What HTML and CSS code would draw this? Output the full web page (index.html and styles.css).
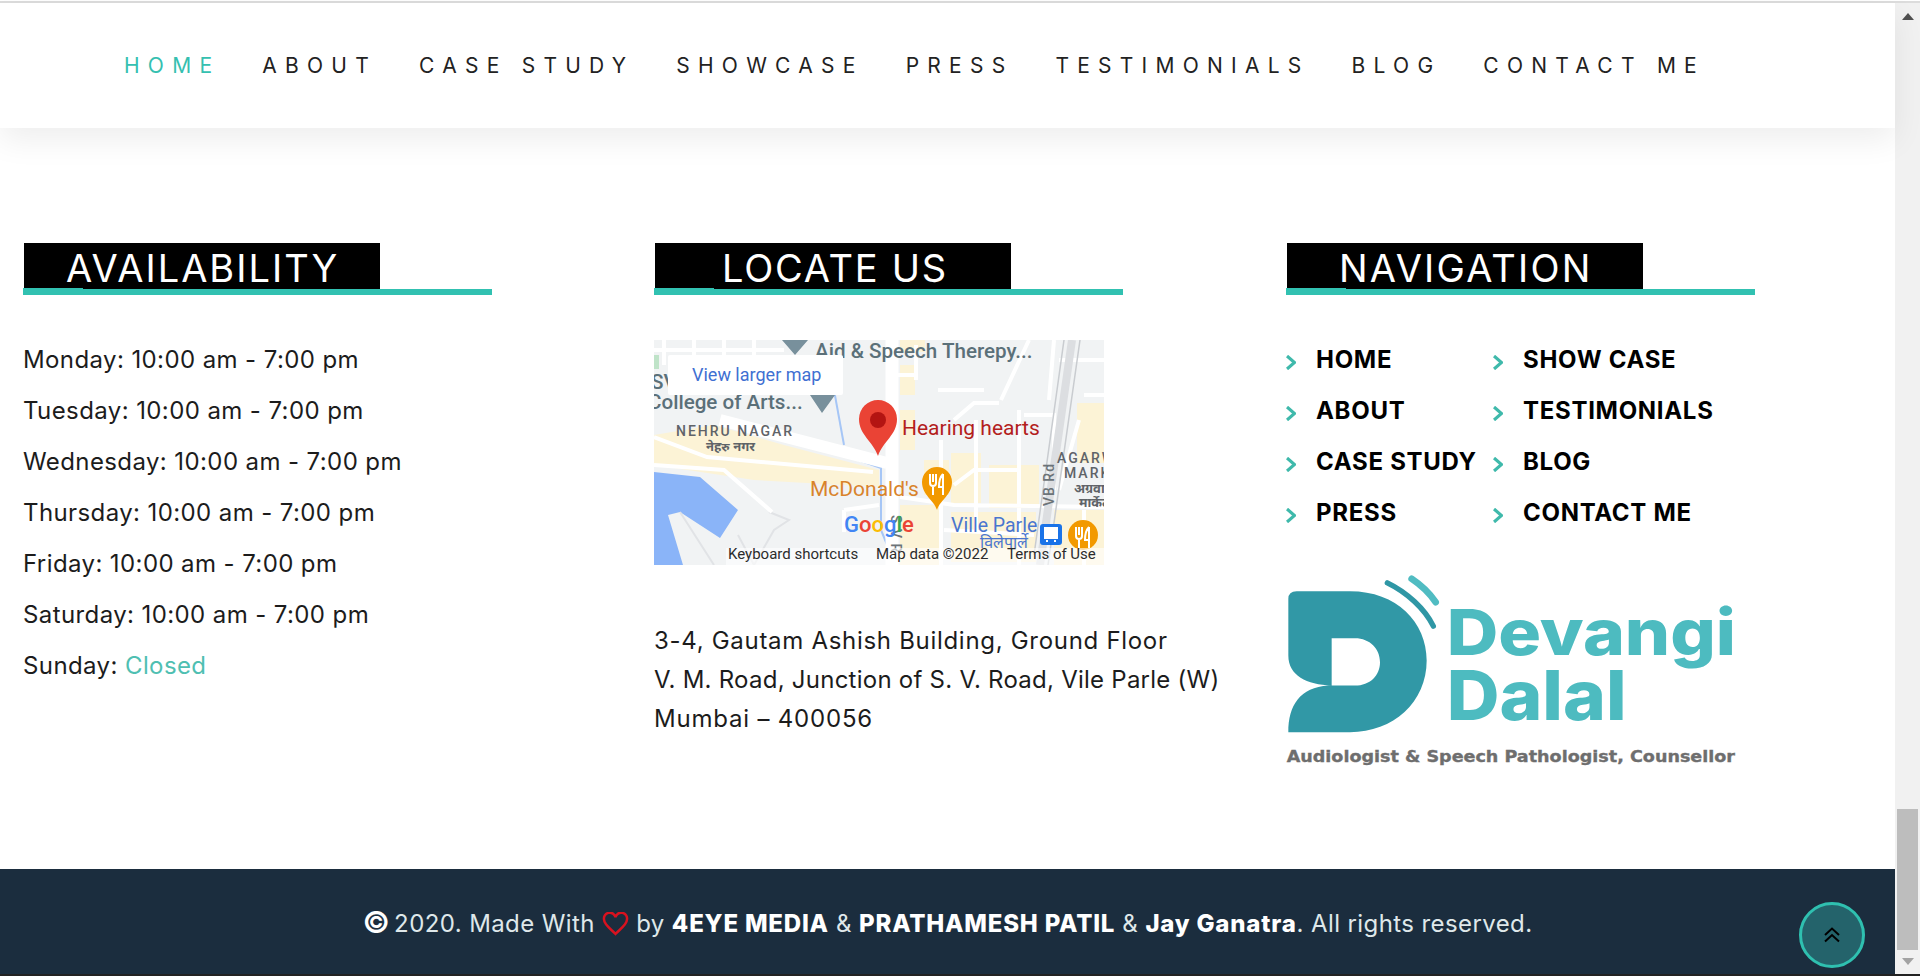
FILE: index.html
```html
<!DOCTYPE html>
<html lang="en">
<head>
<meta charset="utf-8">
<title>Devangi Dalal</title>
<link rel="stylesheet" href="styles.css">
</head>
<body>
<div class="topline"></div>
<div class="viewport">
  <div class="page">
    <nav class="nav">
      <a class="nav-link nav-active">HOME</a>
      <a class="nav-link">ABOUT</a>
      <a class="nav-link">CASE STUDY</a>
      <a class="nav-link">SHOWCASE</a>
      <a class="nav-link">PRESS</a>
      <a class="nav-link">TESTIMONIALS</a>
      <a class="nav-link">BLOG</a>
      <a class="nav-link">CONTACT ME</a>
    </nav>
    <main class="columns">
      <section class="col">
        <div class="heading"><h2 class="heading-box heading-a">AVAILABILITY</h2></div>
        <ul class="hours">
          <li>Monday: 10:00 am - 7:00 pm</li>
          <li>Tuesday: 10:00 am - 7:00 pm</li>
          <li>Wednesday: 10:00 am - 7:00 pm</li>
          <li>Thursday: 10:00 am - 7:00 pm</li>
          <li>Friday: 10:00 am - 7:00 pm</li>
          <li>Saturday: 10:00 am - 7:00 pm</li>
          <li>Sunday: <span class="closed">Closed</span></li>
        </ul>
      </section>
      <section class="col">
        <div class="heading"><h2 class="heading-box heading-b">LOCATE US</h2></div>
        <svg class="map" viewBox="0 0 450 225" width="450" height="225">
          <rect class="m-bg" width="450" height="225"/>
          <path class="m-yellow" d="M0 95 60 85 130 105 225 130 225 147 100 140 0 125Z"/>
          <path class="m-yellow" d="M246 165h39v60h-39zM297 113h30v50h-30zM335 125h50v43h-50zM423 63h27v60h-27zM297 172h85v50h-85zM246 0h25v12h-25zM246 25h15v30h-15zM246 70h15v40h-15zM270 120h25v35h-25zM400 170h50v55h-50z"/>
          <rect class="m-green" x="0" y="15" width="5" height="14"/>
          <path class="m-water" d="M0 132 46 137 84 170 66 198 26 172 14 175 29 225H0Z"/>
          <path class="m-canal" d="M190 115 227 128 227 190 236 212"/>
          <path class="m-canal" d="M180 50 190 105"/>
          <path class="m-pier" d="M26 172 60 225M84 195 100 225 120 190 135 180 115 172M190 170 225 165"/>
          <path class="m-road-s" d="M0 10H130M10 0V25M40 0V15M70 0V15M100 0V15"/>
          <path class="m-road-s" d="M0 97 53 117 219 132M0 125 70 130 118 172M190 170 225 165M190 170V192"/>
          <path class="m-road-s" d="M238 35H262M262 40V5M284 50H330M300 80 320 63 345 63M287 100V225M322 80V190M347 60 375 0M370 75H400V150M365 70V225M300 145 320 130H365M246 157 300 165 450 167M290 190 380 195M400 0 395 60M425 80 405 150M430 170V225M405 20H450M430 55H450"/>
          <path class="m-road-m" d="M66 80 233 123"/>
          <path class="m-road-l" d="M238 0V225"/>
          <path class="m-rail" d="M418 0 386 225"/>
          <path class="m-rail-line" d="M410 0 380 215M426 0 394 225"/>
          <path class="m-marker" d="M128 0H154L141 15ZM156 55H181L168 73Z"/>
          <text class="m-label m-label-big" x="161" y="18">Aid &amp; Speech Therepy...</text>
          <text class="m-label m-label-big" x="-3" y="49">SV</text>
          <text class="m-label m-label-big" x="-6" y="69">College of Arts...</text>
          <rect class="m-card" x="14" y="15" width="175" height="40" rx="2"/>
          <text class="m-link" x="38" y="41">View larger map</text>
          <text class="m-area" x="22" y="96">NEHRU NAGAR</text>
          <text class="m-area-hi" x="52" y="111">नेहरु नगर</text>
          <path class="m-pin" d="M224 116C219 101 205 95 205 79A19 19 0 0 1 243 79C243 95 229 101 224 116Z"/>
          <circle class="m-pin-dot" cx="224" cy="80" r="8"/>
          <text class="m-red" x="248" y="95">Hearing hearts</text>
          <text class="m-orange" x="156" y="156">McDonald's</text>
          <path class="m-opin" d="M283 170C280 160 268 155 268 142A15 15 0 0 1 298 142C298 155 286 160 283 170Z"/>
          <path class="m-fork" d="M276 134V143Q276 146 279 146V155M279 134V142M282 134V143Q282 146 279 146M289 134V155M289 134Q285 138 285 147H289"/>
          <text class="m-area" x="403" y="123">AGARW</text>
          <text class="m-area" x="410" y="138">MARK</text>
          <text class="m-area-hi" x="420" y="153">अग्रवाल</text>
          <text class="m-area-hi" x="425" y="167">मार्केट</text>
          <text class="m-road-name" transform="translate(400 166) rotate(-90)">VB Rd</text>
          <text class="m-road-name" transform="translate(237 175) rotate(90)">S V R</text>
          <text class="m-google" x="190" y="192"><tspan class="g-b">G</tspan><tspan class="g-r">o</tspan><tspan class="g-y">o</tspan><tspan class="g-b">g</tspan><tspan class="g-g">l</tspan><tspan class="g-r">e</tspan></text>
          <text class="m-transit" x="297" y="192">Ville Parle</text>
          <text class="m-transit-hi" x="326" y="208">विलेपार्ले</text>
          <rect class="m-bus" x="386" y="184" width="22" height="21" rx="3"/>
          <path class="m-bus-in" d="M391 188h12v10h-12zM393 200v2M401 200v2"/>
          <circle class="m-opin" cx="429" cy="195" r="15"/>
          <path class="m-fork" d="M422 187V196Q422 199 425 199V208M425 187V195M428 187V196Q428 199 425 199M435 187V208M435 187Q431 191 431 200H435"/>
          <rect class="m-attr" x="72" y="208" width="378" height="17"/>
          <text class="m-attr-t" x="74" y="219">Keyboard shortcuts</text>
          <text class="m-attr-t" x="222" y="219">Map data ©2022</text>
          <text class="m-attr-t" x="353" y="219">Terms of Use</text>
        </svg>
        <address class="addr">
          <span class="addr-line addr-a">3-4, Gautam Ashish Building, Ground Floor</span>
          <span class="addr-line addr-b">V. M. Road, Junction of S. V. Road, Vile Parle (W)</span>
          <span class="addr-line addr-c">Mumbai – 400056</span>
        </address>
      </section>
      <section class="col">
        <div class="heading"><h2 class="heading-box heading-c">NAVIGATION</h2></div>
        <ul class="links">
          <li class="link"><svg class="chev" viewBox="0 0 10 15"><path d="M1 1 8.500 7.500 1 14"/></svg>HOME</li>
          <li class="link"><svg class="chev" viewBox="0 0 10 15"><path d="M1 1 8.500 7.500 1 14"/></svg>SHOW CASE</li>
          <li class="link"><svg class="chev" viewBox="0 0 10 15"><path d="M1 1 8.500 7.500 1 14"/></svg>ABOUT</li>
          <li class="link"><svg class="chev" viewBox="0 0 10 15"><path d="M1 1 8.500 7.500 1 14"/></svg>TESTIMONIALS</li>
          <li class="link"><svg class="chev" viewBox="0 0 10 15"><path d="M1 1 8.500 7.500 1 14"/></svg>CASE STUDY</li>
          <li class="link"><svg class="chev" viewBox="0 0 10 15"><path d="M1 1 8.500 7.500 1 14"/></svg>BLOG</li>
          <li class="link"><svg class="chev" viewBox="0 0 10 15"><path d="M1 1 8.500 7.500 1 14"/></svg>PRESS</li>
          <li class="link"><svg class="chev" viewBox="0 0 10 15"><path d="M1 1 8.500 7.500 1 14"/></svg>CONTACT ME</li>
        </ul>
        <svg class="logo" viewBox="48 40 1362 590" width="454" height="197">
          <path class="l-d" d="M55 120Q55 97 80 97L240 97C380 97 470 190 470 305C470 430 370 520 240 520L55 520C55 440 90 385 175 380L255 380C300 380 330 350 330 310C330 270 300 238 255 238L185 238L185 380C110 378 55 350 55 290Z"/>
          <path class="l-arc1" d="M352 72C410 100 465 150 490 202"/>
          <path class="l-arc2" d="M425 60C455 80 480 105 497 130"/>
          <text class="l-name" x="530" y="290" textLength="868" lengthAdjust="spacingAndGlyphs">Devangi</text>
          <text class="l-name l-name-b" x="530" y="485" textLength="540" lengthAdjust="spacingAndGlyphs">Dalal</text>
          <text class="l-tag" x="50" y="610" textLength="1345" lengthAdjust="spacingAndGlyphs">Audiologist &amp; Speech Pathologist, Counsellor</text>
        </svg>
      </section>
    </main>
    <footer class="footer">
      <p class="foot-text"><b class="copy">©</b> 2020. Made With <svg class="heart" viewBox="0 0 26 23"><path d="M13 21C8 16 2 12 2 7.500A5.500 5.500 0 0 1 13 5A5.500 5.500 0 0 1 24 7.500C24 12 18 16 13 21Z"/></svg> by <b>4EYE MEDIA</b> &amp; <b>PRATHAMESH PATIL</b> &amp; <b>Jay Ganatra</b>. All rights reserved.</p>
      <a class="totop"><svg class="totop-i" viewBox="0 0 16 16"><path d="M1 8 8 1.500 15 8M1 14.500 8 8 15 14.500"/></svg></a>
    </footer>
  </div>
  <div class="scrollbar">
    <span class="sb-up"></span>
    <span class="sb-thumb"></span>
    <span class="sb-down"></span>
  </div>
</div>
<div class="bottomline"></div>
</body>
</html>
```
FILE: styles.css
```css
* { box-sizing: border-box; }
html, body { margin: 0; height: 976px; overflow: hidden; }
body { display: flex; flex-direction: column; background: #fff; color: #1c1c1c; font-family: Inter, "Noto Sans", sans-serif; }
.topline { height: 3px; flex: none; border-top: 1px solid #fff; background: #dcdcdc; }
.bottomline { height: 2px; flex: none; background: #222; }
.viewport { flex: 1; display: flex; min-height: 0; }
.page { flex: 1; display: flex; flex-direction: column; min-width: 0; position: relative; }

.nav { height: 125px; flex: none; display: flex; align-items: center; padding-left: 124px; gap: 42px; background: #fff; box-shadow: 0 12px 30px rgba(0,0,0,.07); position: relative; z-index: 1; }
.nav-link { font-size: 21px; letter-spacing: 8.25px; color: #222; font-weight: 400; white-space: nowrap; }
.nav-active { color: #35c0b0; }

.columns { flex: 1; display: grid; grid-template-columns: 631px 632px 1fr; padding: 115px 0 0 23px; }
.heading { width: 469px; border-bottom: 6px solid #31c1b1; padding-left: 1px; position: relative; }
.heading::after { content: ""; position: absolute; left: 0; bottom: 0; width: 60px; height: 1px; background: #31c1b1; }
.heading-box { width: 356px; height: 46px; margin: 0; padding-top: 5px; background: #000; color: #fff; font-size: 38px; line-height: 41px; font-weight: 400; white-space: nowrap; }
.heading-a { padding-left: 42px; letter-spacing: 2px; }
.heading-b { padding-left: 67px; letter-spacing: 1.75px; }
.heading-c { padding-left: 52px; letter-spacing: 2.2px; }

.hours, .links { list-style: none; margin: 0; padding: 0; }
.hours { margin-top: 39px; }
.hours li { height: 51px; line-height: 51px; font-size: 24px; letter-spacing: .4px; white-space: nowrap; }
.closed { color: #4fbfb2; }

.map { display: block; margin-top: 45px; }
.m-bg { fill: #f1f3f4; }
.m-yellow { fill: #fcf3d6; }
.m-green { fill: #bfe3c8; }
.m-water { fill: #8ab4f8; }
.m-canal { fill: none; stroke: #a6c6f6; stroke-width: 2; }
.m-pier { fill: none; stroke: #e1e3e6; stroke-width: 2; }
.m-road-s, .m-road-m, .m-road-l { fill: none; stroke: #fff; }
.m-road-s { stroke-width: 4; }
.m-road-m { stroke-width: 12; }
.m-road-l { stroke-width: 13; }
.m-rail { fill: none; stroke: #dcdee1; stroke-width: 8; }
.m-rail-line { fill: none; stroke: #c9ccd0; stroke-width: 1.500; }
.m-marker { fill: #78909c; }
.m-label { font-family: Roboto, sans-serif; fill: #5b7079; }
.m-label-big { font-size: 20.6px; font-weight: 500; }
.m-card { fill: #fff; }
.m-link { font-family: Roboto, sans-serif; font-size: 18px; fill: #3f70d2; }
.m-area { font-family: Roboto, sans-serif; font-size: 14px; font-weight: 500; letter-spacing: 2px; fill: #5f6368; }
.m-area-hi { font-family: "Noto Sans", "DejaVu Sans", sans-serif; font-size: 13px; font-weight: 700; fill: #5f6368; }
.m-pin { fill: #ea4335; }
.m-pin-dot { fill: #b31412; }
.m-red { font-family: Roboto, sans-serif; font-size: 21px; fill: #b3201c; }
.m-orange { font-family: Roboto, sans-serif; font-size: 21px; fill: #d9832b; }
.m-opin { fill: #f29900; }
.m-fork { fill: none; stroke: #fff; stroke-width: 2; }
.m-road-name { font-family: Roboto, sans-serif; font-size: 14px; font-weight: 500; letter-spacing: 1px; fill: #6b7378; }
.m-google { font-family: Roboto, sans-serif; font-size: 22px; font-weight: 500; }
.g-b { fill: #4285f4; }
.g-r { fill: #ea4335; }
.g-y { fill: #fbbc05; }
.g-g { fill: #34a853; }
.m-transit { font-family: Roboto, sans-serif; font-size: 19.500px; fill: #4a75cf; }
.m-transit-hi { font-family: "Noto Sans", "DejaVu Sans", sans-serif; font-size: 16px; fill: #4a75cf; }
.m-bus { fill: #1a73e8; }
.m-bus-in { fill: #fff; stroke: #fff; stroke-width: 2; }
.m-attr { fill: rgba(255,255,255,.6); }
.m-attr-t { font-family: Roboto, sans-serif; font-size: 15px; fill: #2c2c2c; }

.addr { margin-top: 56px; font-style: normal; font-size: 24px; line-height: 39px; }
.addr-line { display: block; white-space: nowrap; }
.addr-a { letter-spacing: .7px; }
.addr-b { letter-spacing: .25px; }
.addr-c { letter-spacing: .8px; }

.links { display: grid; grid-template-columns: 207px 1fr; margin-top: 39px; }
.link { height: 51px; display: flex; align-items: center; font-size: 24px; font-weight: 700; color: #000; letter-spacing: .7px; white-space: nowrap; }
.chev { width: 10px; height: 15px; margin-right: 20px; position: relative; top: 3px; flex: none; }
.chev path { fill: none; stroke: #3fb9ab; stroke-width: 3.200; }

.logo { display: block; margin-top: 34px; }
.l-d { fill: #3198a6; }
.l-arc1, .l-arc2 { fill: none; stroke-linecap: round; }
.l-arc1 { stroke: #2f97a5; stroke-width: 16; }
.l-arc2 { stroke: #50bcc2; stroke-width: 20; }
.l-name { font-family: Inter, sans-serif; font-size: 190px; font-weight: 800; fill: #4dbbc0; }
.l-name-b { font-size: 205px; }
.l-tag { font-family: "DejaVu Sans", sans-serif; font-size: 46px; font-weight: 700; fill: #6e6e6e; stroke: #6e6e6e; stroke-width: 1; }

.footer { height: 105px; flex: none; background: #1b2d3e; display: flex; align-items: center; justify-content: center; position: relative; }
.foot-text { margin: 1px 0 0; color: #dfe8ea; font-size: 24px; letter-spacing: .4px; white-space: nowrap; }
.foot-text b { color: #fff; font-weight: 800; letter-spacing: .8px; }
.foot-text .copy { font-size: 30px; font-weight: 600; line-height: 1; letter-spacing: 0; margin-right: -3px; vertical-align: -1px; }
.heart { width: 27px; height: 24px; vertical-align: -4px; }
.heart path { fill: none; stroke: #d8121f; stroke-width: 2.400; }
.totop { position: absolute; left: 1799px; top: 33px; width: 66px; height: 66px; border-radius: 50%; border: 3px solid #2fc0b0; background: #24636b; display: flex; align-items: center; justify-content: center; }
.totop-i { width: 16px; height: 16px; }
.totop-i path { fill: none; stroke: #000; stroke-width: 2; }

.scrollbar { width: 25px; flex: none; background: #f1f1f1; display: flex; flex-direction: column; align-items: center; }
.sb-up { margin-top: 10px; width: 0; height: 0; border-left: 6px solid transparent; border-right: 6px solid transparent; border-bottom: 7px solid #505050; }
.sb-thumb { margin-top: auto; width: 21px; height: 141px; background: #bdbdbd; }
.sb-down { margin: 8px 0 9px; width: 0; height: 0; border-left: 6px solid transparent; border-right: 6px solid transparent; border-top: 7px solid #a3a3a3; }
```
